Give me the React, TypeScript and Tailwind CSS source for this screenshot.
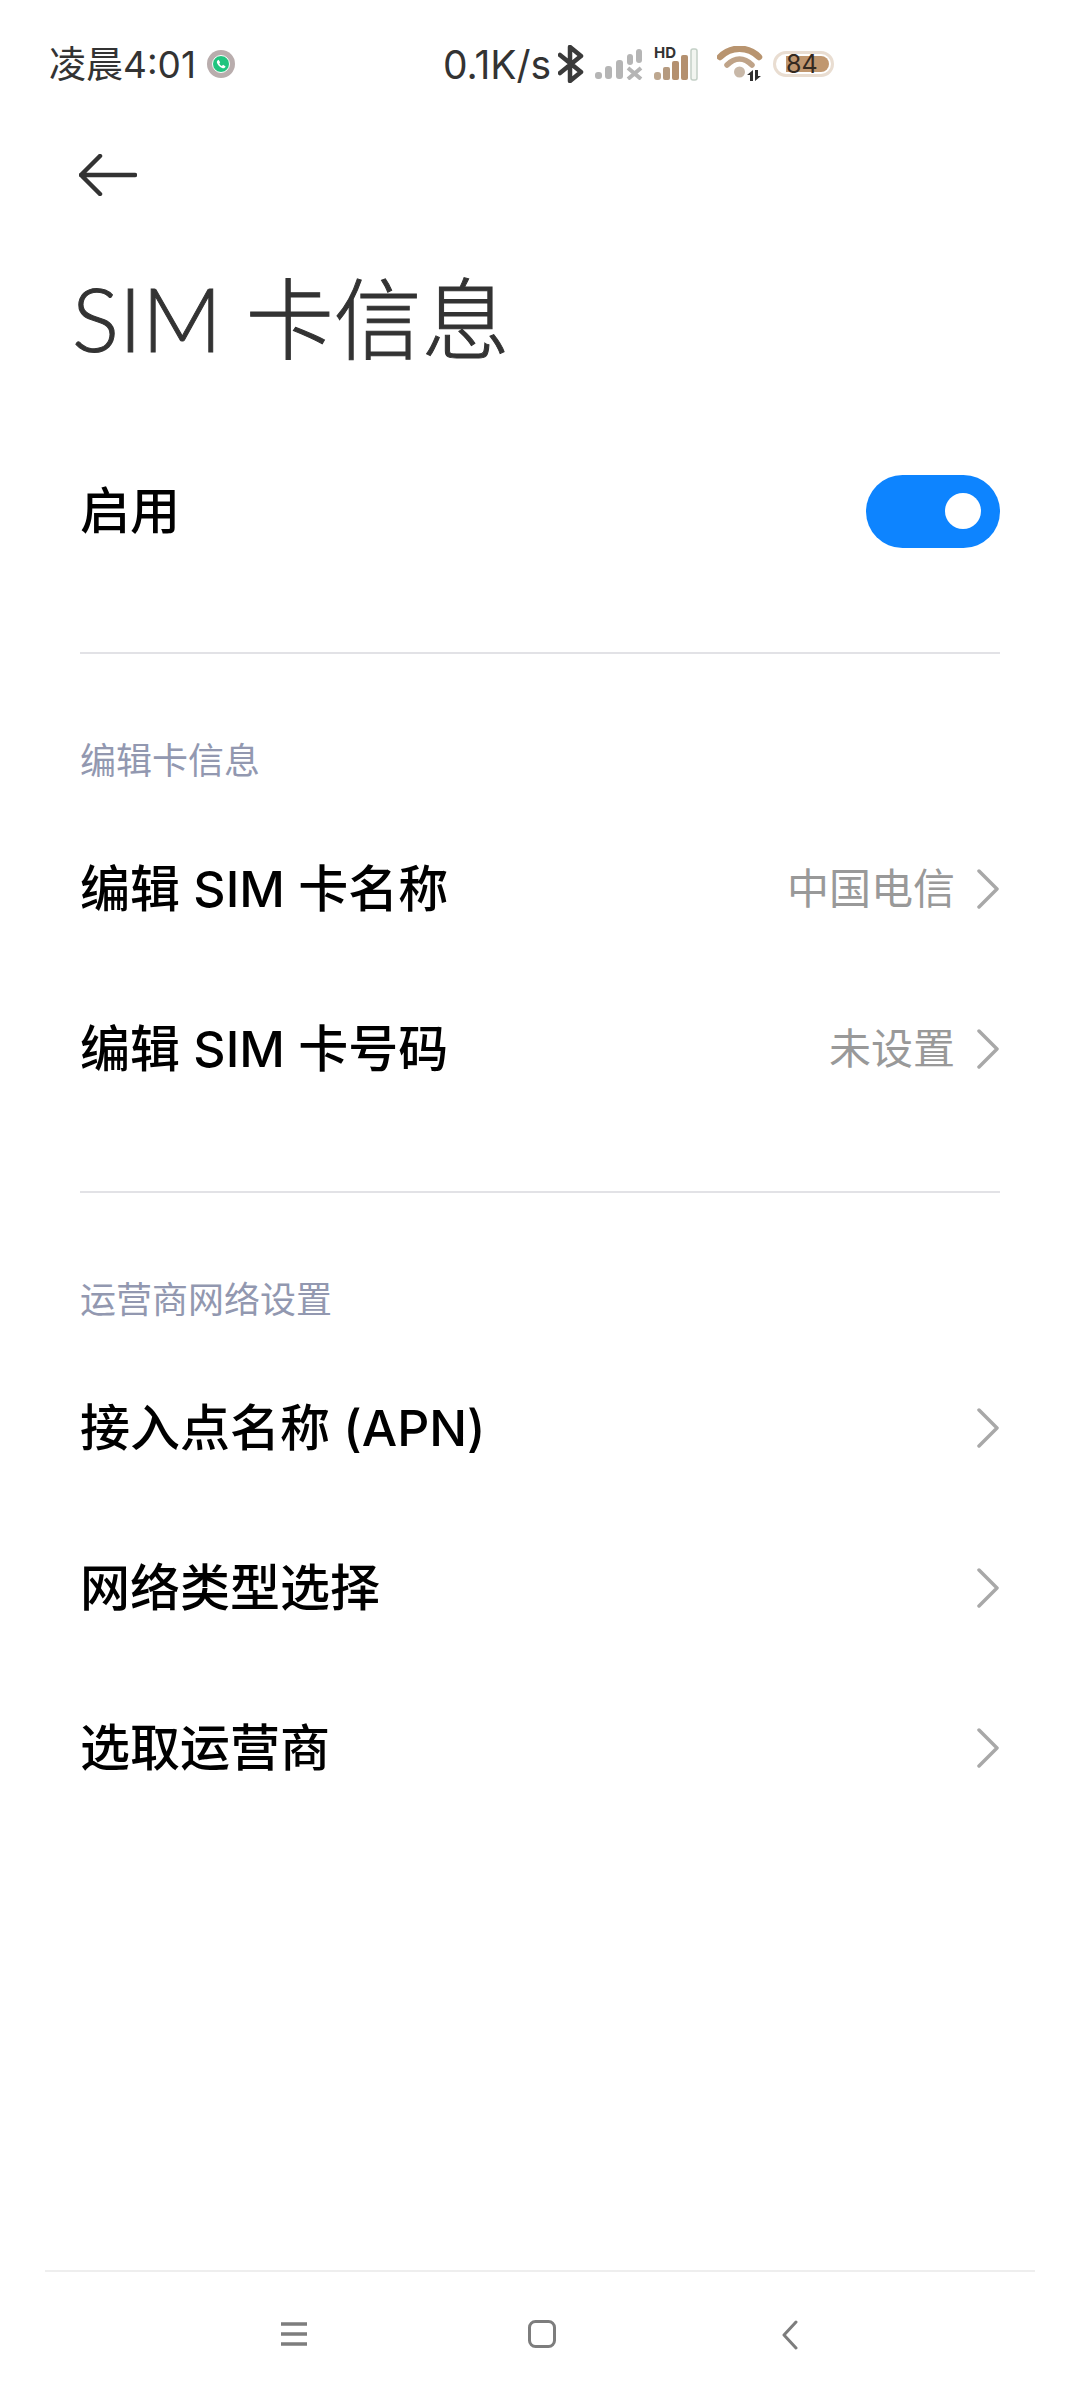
import React from 'react';

const font = "font-['Inter','Noto_Sans_CJK_SC',sans-serif]";

const Chevron = () => (
  <svg width="24" height="40" viewBox="0 0 24 40" fill="none" className="ml-[21px]">
    <path d="M3 2 L21 20 L3 38" stroke="#a8a8a8" strokeWidth="3.5" strokeLinecap="round" strokeLinejoin="round" />
  </svg>
);

const Row = ({ title, value }: { title: string; value?: string }) => (
  <div className="flex h-[160px] items-center justify-between px-[80px]">
    <span className="text-[50px] font-medium leading-none text-black">{title}</span>
    <div className="flex items-center">
      {value && <span className="text-[42px] leading-none text-[#999999]">{value}</span>}
      <Chevron />
    </div>
  </div>
);

const SectionLabel = ({ children, className }: { children: string; className: string }) => (
  <div className={`flex h-[60px] items-center px-[80px] text-[36px] leading-none text-[#9298b0] ${className}`}>
    {children}
  </div>
);

const Divider = ({ className }: { className: string }) => (
  <div className={`mx-[80px] h-[2px] bg-[#e2e2e6] ${className}`} />
);

const StatusIcons = () => (
  <div className="ml-[5px] flex items-center">
    {/* bluetooth */}
    <svg width="26" height="38" viewBox="0 0 26 38" fill="none">
      <path d="M2 10 L23 27 L12 36 V2 L23 11 L2 28" stroke="#3a3a3a" strokeWidth="4.5" strokeLinejoin="round" strokeLinecap="round" />
    </svg>
    {/* sim 2 signal, crossed out */}
    <svg width="48" height="32" viewBox="0 0 48 32" className="ml-[11px]" fill="#b5b5b5">
      <rect x="0" y="24" width="7" height="7" rx="3" />
      <rect x="10" y="18" width="7" height="13" rx="3" />
      <rect x="21" y="12" width="7" height="19" rx="3" />
      <rect x="32" y="6" width="6" height="11" rx="3" />
      <rect x="41" y="1" width="6" height="14" rx="3" />
      <path d="M33 20 L46 31 M46 20 L33 31" stroke="#b5b5b5" strokeWidth="4" />
    </svg>
    {/* sim 1 signal with HD */}
    <div className="relative ml-[11px] h-[34px] w-[45px]">
      <svg width="45" height="34" viewBox="0 0 45 34" className="absolute inset-0">
        <rect x="0" y="25" width="7" height="8" rx="3" fill="#bda78f" />
        <rect x="9" y="20" width="7" height="13" rx="2" fill="#b59a7f" />
        <rect x="18" y="14" width="7" height="19" rx="2" fill="#b4906f" />
        <rect x="27" y="8" width="7" height="25" rx="2" fill="#b4906f" />
        <rect x="37" y="2" width="6" height="31" rx="2" fill="#f2f5f0" stroke="#c3d0c6" strokeWidth="1.5" />
      </svg>
      <span className="absolute left-0 top-[-2px] text-[15px] font-bold leading-none text-[#333333]">HD</span>
    </div>
    {/* wifi */}
    <svg width="46" height="36" viewBox="0 0 46 36" fill="none" className="ml-[18px]">
      <path d="M3 11 C14 0 31 0 42 11" stroke="#b8946f" strokeWidth="6.5" strokeLinecap="round" />
      <path d="M10 19 C18 11 27 11 35 19" stroke="#bfa388" strokeWidth="5.5" strokeLinecap="round" />
      <circle cx="22.5" cy="26" r="5.5" fill="#c8b8a8" />
      <path d="M36 24 V35 H33 V29 H30 Z M38 35 V24 H41 V30 H44 Z" fill="#2f2f2f" />
    </svg>
    {/* battery */}
    <div className="relative ml-[10px] flex h-[26px] w-[61px] items-center rounded-full border-[3px] border-[#e9ddd1] bg-white pl-[10px]">
      <div className="h-[16px] w-[43px] rounded-r-full bg-[#c0976f]" />
      <span className="absolute left-[10px] top-[-2px] text-[25px] leading-[24px] text-[#33291f]">84</span>
    </div>
  </div>
);

const App = () => {
  return (
    <div className={`flex h-[2400px] w-[1080px] flex-col bg-white ${font}`}>
      <div className="flex h-[128px] items-center pl-[49px] text-[#333333]">
        <span className="w-[147px] whitespace-nowrap text-[37px] leading-none">凌晨4:01</span>
        <div className="relative ml-[11px] h-[28px] w-[28px] rounded-full bg-[#b9adad]">
          <div className="absolute left-[5px] top-[5px] flex h-[18px] w-[18px] items-center justify-center rounded-full border border-white bg-[#1fc47e]">
            <svg width="10" height="10" viewBox="0 0 24 24" fill="white">
              <path d="M6 2 L10 8 L8 11 C9 14 11 16 14 17 L17 14 L23 18 C22 21 19 23 16 22 C9 20 3 14 2 8 C2 5 4 3 6 2 Z" />
            </svg>
          </div>
        </div>
        <span className="ml-[208px] w-[110px] whitespace-nowrap text-[39px] leading-none">0.1K/s</span>
        <StatusIcons />
      </div>

      <div className="flex h-[94px] items-center pl-[79px]">
        {/* back arrow */}
        <svg width="58" height="42" viewBox="0 0 58 42" fill="none">
          <path d="M21 2 L2 21 L21 40 M2 21 H56" stroke="#333333" strokeWidth="4.5" strokeLinecap="round" strokeLinejoin="round" />
        </svg>
      </div>

      <div className="flex h-[192px] items-center pl-[72px] font-['Lato','Noto_Sans_CJK_SC',sans-serif] text-[88px] font-light leading-none text-[#333333] [-webkit-text-stroke:1px_#333333]">
        SIM 卡信息
      </div>

      <div className="flex h-[194px] items-center justify-between px-[80px]">
        <span className="text-[50px] font-medium leading-none text-black">启用</span>
        <div className="flex h-[73px] w-[134px] items-center justify-end rounded-full bg-[#0d84ff] pr-[19px]">
          <div className="h-[36px] w-[36px] rounded-full bg-white" />
        </div>
      </div>

      <Divider className="mt-[44px]" />
      <SectionLabel className="mt-[77px]">编辑卡信息</SectionLabel>
      <div className="mt-[18px]">
        <Row title="编辑 SIM 卡名称" value="中国电信" />
        <Row title="编辑 SIM 卡号码" value="未设置" />
      </div>

      <Divider className="mt-[62px]" />
      <SectionLabel className="mt-[77px]">运营商网络设置</SectionLabel>
      <div className="mt-[18px]">
        <Row title="接入点名称 (APN)" />
        <Row title="网络类型选择" />
        <Row title="选取运营商" />
      </div>

      <div className="flex-1" />

      <div className="mx-[45px] h-[2px] bg-[#eeeeee]" />
      <div className="flex h-[128px] items-start pl-[280px] pt-[49px]">
        {/* recents, home, back */}
        <svg width="28" height="26" viewBox="0 0 28 26" className="mr-[220px]">
          <path d="M1 3 H27 M1 13 H27 M1 23 H27" stroke="#7d7d7d" strokeWidth="3.5" />
        </svg>
        <svg width="28" height="28" viewBox="0 0 28 28" fill="none" className="mr-[226px] mt-[-1px]">
          <rect x="1.5" y="1.5" width="25" height="25" rx="6" stroke="#7d7d7d" strokeWidth="3" />
        </svg>
        <svg width="16" height="30" viewBox="0 0 16 30" fill="none" className="mt-[-1px]">
          <path d="M14 2 L2 15 L14 28" stroke="#7d7d7d" strokeWidth="3" strokeLinecap="round" strokeLinejoin="round" />
        </svg>
      </div>
    </div>
  );
};

export default App;
